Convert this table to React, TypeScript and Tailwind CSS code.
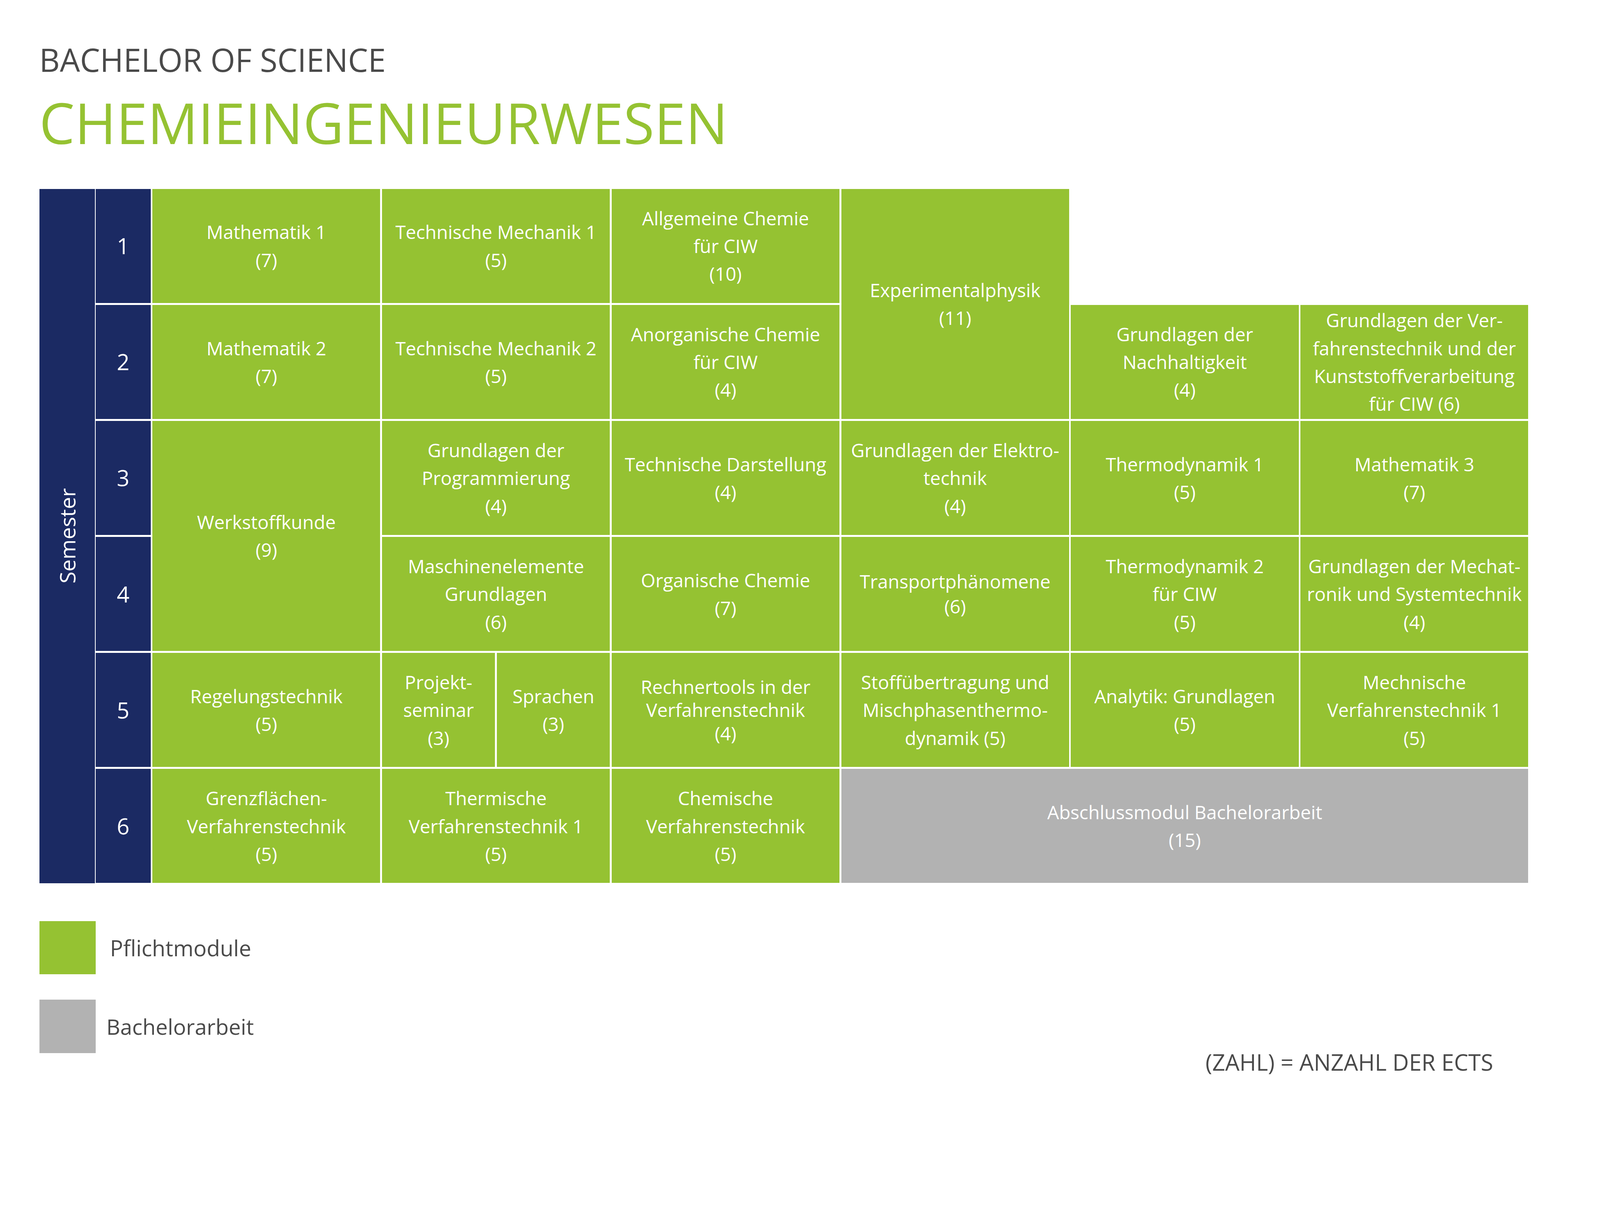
import React from "react";

type Cell = {
  pos: string;
  lines: string[];
  leading?: string;
  gray?: boolean;
};

const CELLS: Cell[] = [
  { pos: "col-start-2 row-start-1", lines: ["Mathematik 1", "(7)"] },
  { pos: "col-start-3 row-start-1", lines: ["Technische Mechanik 1", "(5)"] },
  { pos: "col-start-4 row-start-1", lines: ["Allgemeine Chemie", "für CIW", "(10)"] },
  { pos: "col-start-5 row-start-1 row-span-2", lines: ["Experimentalphysik", "(11)"] },

  { pos: "col-start-2 row-start-2", lines: ["Mathematik 2", "(7)"] },
  { pos: "col-start-3 row-start-2", lines: ["Technische Mechanik 2", "(5)"] },
  { pos: "col-start-4 row-start-2", lines: ["Anorganische Chemie", "für CIW", "(4)"] },
  { pos: "col-start-6 row-start-2", lines: ["Grundlagen der", "Nachhaltigkeit", "(4)"] },
  {
    pos: "col-start-7 row-start-2",
    lines: ["Grundlagen der Ver-", "fahrenstechnik und der", "Kunststoffverarbeitung", "für CIW (6)"],
  },

  { pos: "col-start-2 row-start-3 row-span-2", lines: ["Werkstoffkunde", "(9)"] },
  { pos: "col-start-3 row-start-3", lines: ["Grundlagen der", "Programmierung", "(4)"] },
  { pos: "col-start-4 row-start-3", lines: ["Technische Darstellung", "(4)"] },
  { pos: "col-start-5 row-start-3", lines: ["Grundlagen der Elektro-", "technik", "(4)"] },
  { pos: "col-start-6 row-start-3", lines: ["Thermodynamik 1", "(5)"] },
  { pos: "col-start-7 row-start-3", lines: ["Mathematik 3", "(7)"] },

  { pos: "col-start-3 row-start-4", lines: ["Maschinenelemente", "Grundlagen", "(6)"] },
  { pos: "col-start-4 row-start-4", lines: ["Organische Chemie", "(7)"] },
  { pos: "col-start-5 row-start-4", lines: ["Transportphänomene", "(6)"], leading: "leading-[64px]" },
  { pos: "col-start-6 row-start-4", lines: ["Thermodynamik 2", "für CIW", "(5)"] },
  { pos: "col-start-7 row-start-4", lines: ["Grundlagen der Mechat-", "ronik und Systemtechnik", "(4)"] },

  { pos: "col-start-2 row-start-5", lines: ["Regelungstechnik", "(5)"] },
  {
    pos: "col-start-4 row-start-5",
    lines: ["Rechnertools in der", "Verfahrenstechnik", "(4)"],
    leading: "leading-[59.5px]",
  },
  { pos: "col-start-5 row-start-5", lines: ["Stoffübertragung und", "Mischphasenthermo-", "dynamik (5)"] },
  { pos: "col-start-6 row-start-5", lines: ["Analytik: Grundlagen", "(5)"] },
  { pos: "col-start-7 row-start-5", lines: ["Mechnische", "Verfahrenstechnik 1", "(5)"] },

  { pos: "col-start-2 row-start-6", lines: ["Grenzflächen-", "Verfahrenstechnik", "(5)"] },
  { pos: "col-start-3 row-start-6", lines: ["Thermische", "Verfahrenstechnik 1", "(5)"] },
  { pos: "col-start-4 row-start-6", lines: ["Chemische", "Verfahrenstechnik", "(5)"] },
  { pos: "col-start-5 row-start-6 col-span-3", lines: ["Abschlussmodul Bachelorarbeit", "(15)"], gray: true },
];

const SEMESTER_ROWS = [
  "row-start-1",
  "row-start-2",
  "row-start-3",
  "row-start-4",
  "row-start-5",
  "row-start-6",
];

function Module({
  lines,
  leading = "leading-[71.3px]",
  className = "",
}: {
  lines: string[];
  leading?: string;
  className?: string;
}) {
  return (
    <div
      className={`flex flex-col items-center justify-center text-center text-[47.7px] text-white ${leading} ${className}`}
    >
      {lines.map((l) => (
        <span key={l} className="whitespace-nowrap">
          {l}
        </span>
      ))}
    </div>
  );
}

export default function App() {
  return (
    <div className="h-[2880px] w-[4100px] overflow-hidden bg-white pl-[100.5px] pt-[111.5px] font-['Open_Sans',sans-serif]">
      <p className="text-[81.5px] leading-none text-[#4a4a4a]">BACHELOR OF SCIENCE</p>
      <h1 className="mt-[48px] text-[144px] leading-none text-[#95c232]">CHEMIEINGENIEURWESEN</h1>

      <div className="mt-[98.5px] flex">
        <div className="flex h-[1778px] w-[142.6px] items-center justify-center bg-[#1b2a63]">
          <span className="rotate-180 text-[55.5px] leading-none text-white [writing-mode:vertical-rl]">
            Semester
          </span>
        </div>

        <div className="ml-[1.8px] grid grid-cols-[140.8px_repeat(6,583.2px)] grid-rows-[repeat(6,292.5px)] gap-[4.6px]">
          {SEMESTER_ROWS.map((row, i) => (
            <div
              key={row}
              className={`col-start-1 ${row} flex items-center justify-center bg-[#1b2a63] text-[56.7px] text-white`}
            >
              {i + 1}
            </div>
          ))}

          {CELLS.map((c) => (
            <Module
              key={c.lines[0]}
              lines={c.lines}
              leading={c.leading}
              className={`${c.pos} ${c.gray ? "bg-[#b2b2b2]" : "bg-[#95c232]"}`}
            />
          ))}

          <div className="col-start-3 row-start-5 flex gap-[5px]">
            <Module lines={["Projekt-", "seminar", "(3)"]} className="flex-1 bg-[#95c232]" />
            <Module lines={["Sprachen", "(3)"]} className="flex-1 bg-[#95c232]" />
          </div>
        </div>
      </div>

      <div className="mt-[97.8px] flex flex-col gap-[65px]">
        <div className="flex items-center">
          <div className="h-[136.2px] w-[144.4px] bg-[#95c232]" />
          <span className="ml-[36.6px] text-[56px] leading-none text-[#4a4a4a]">Pflichtmodule</span>
        </div>
        <div className="flex items-center">
          <div className="h-[136.2px] w-[144.4px] bg-[#b2b2b2]" />
          <span className="ml-[27.4px] text-[55px] leading-none text-[#4a4a4a]">Bachelorarbeit</span>
        </div>
      </div>

      <p className="-mt-[6px] w-[3722px] text-right text-[58px] leading-none text-[#4a4a4a]">
        (ZAHL) = ANZAHL DER ECTS
      </p>
    </div>
  );
}
